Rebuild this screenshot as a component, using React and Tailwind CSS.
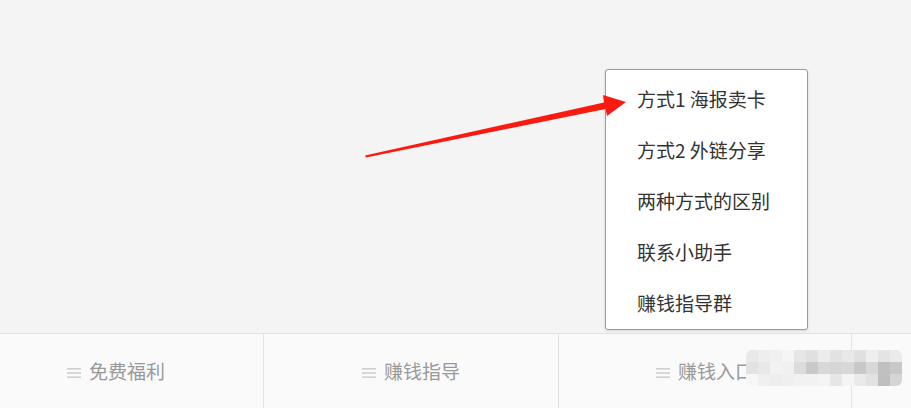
import React from 'react';

const menuItems = ['方式1 海报卖卡', '方式2 外链分享', '两种方式的区别', '联系小助手', '赚钱指导群'];
const tabs = ['免费福利', '赚钱指导', '赚钱入口', ''];

// blurred mosaic next to the last tab
const mosaic = [
    ['#e9e9e9', '#eeeeee', '#f0f0f0', '#f5f5f5', '#e6e6e6', '#e0e0e0', '#ececec', '#e2e2e2', '#e8e8e8', '#e0e0e0', '#eeeeee', '#e4e4e4', '#eaeaea'],
    ['#e2e2e2', '#e8e8e8', '#f2f2f2', '#f0f0f0', '#dcdcdc', '#c9c9c9', '#d8d8d8', '#d6d6d6', '#d8d8d8', '#c8c8c8', '#d8d8d8', '#c0c0c0', '#c8c8c8'],
    ['#f6f6f6', '#f0f0f0', '#ededed', '#efefef', '#f2f2f2', '#f2f2f2', '#f4f4f4', '#e6e6e6', '#f4f4f4', '#eaeaea', '#e2e2e2', '#bfbfbf', '#d6d6d6'],
];

const MenuIcon = () => (
    <svg className="w-[14px] h-[12px] mr-2 mt-[4px]" viewBox="0 0 14 12">
        <rect x="0" y="1" width="14" height="1.6" fill="#cfcfcf" />
        <rect x="0" y="5.2" width="14" height="1.6" fill="#cfcfcf" />
        <rect x="0" y="9.4" width="14" height="1.6" fill="#cfcfcf" />
    </svg>
);

const App = () => {
    return (
        <div
            className="relative w-[911px] h-[408px] overflow-hidden bg-[#f4f4f4] flex flex-col"
            style={{ fontFamily: '"Noto Sans CJK SC", "Noto Sans", sans-serif' }}
        >
            <div className="flex-1 relative">
                {/* dropdown */}
                <div className="absolute left-[605px] top-[69px] w-[203px] h-[261px] bg-white border border-[#9a9a9a] rounded-[3px] shadow-[0_1px_3px_rgba(0,0,0,0.12)] z-10 pt-[13px]">
                    {menuItems.map((item) => (
                        <div key={item} className="h-[51px] pl-[31px] text-[19px] leading-[32px] text-[#333]">
                            {item}
                        </div>
                    ))}
                </div>

                {/* red arrow, drawn over the menu */}
                <svg className="absolute left-0 top-0 z-20 pointer-events-none" width="911" height="333" viewBox="0 0 911 333">
                    <path d="M365 155.5 L604 102.5 L603 95 L626 102 L607 116 L605.5 109 L366 157.5 Z" fill="#fb1a0f" />
                </svg>
            </div>

            {/* bottom tab bar */}
            <div className="h-[75px] shrink-0 bg-[#fafafa] border-t border-[#e3e3e3] flex ml-[-31px]">
                {tabs.map((t, i) => (
                    <div
                        key={i}
                        className={`shrink-0 flex items-center justify-center border-r border-[#e3e3e3] ${i === 2 ? 'w-[293px]' : 'w-[295px]'}`}
                    >
                        {t && (
                            <>
                                <MenuIcon />
                                <span className="text-[19px] text-[#999]">{t}</span>
                            </>
                        )}
                    </div>
                ))}
            </div>

            <div className="absolute left-[746px] top-[350px] z-20 flex flex-col rounded-[6px] overflow-hidden">
                {mosaic.map((row, r) => (
                    <div key={r} className="flex">
                        {row.map((c, k) => (
                            <div key={k} className="w-[12px] h-[12px]" style={{ backgroundColor: c }} />
                        ))}
                    </div>
                ))}
            </div>
        </div>
    );
};

export default App;
